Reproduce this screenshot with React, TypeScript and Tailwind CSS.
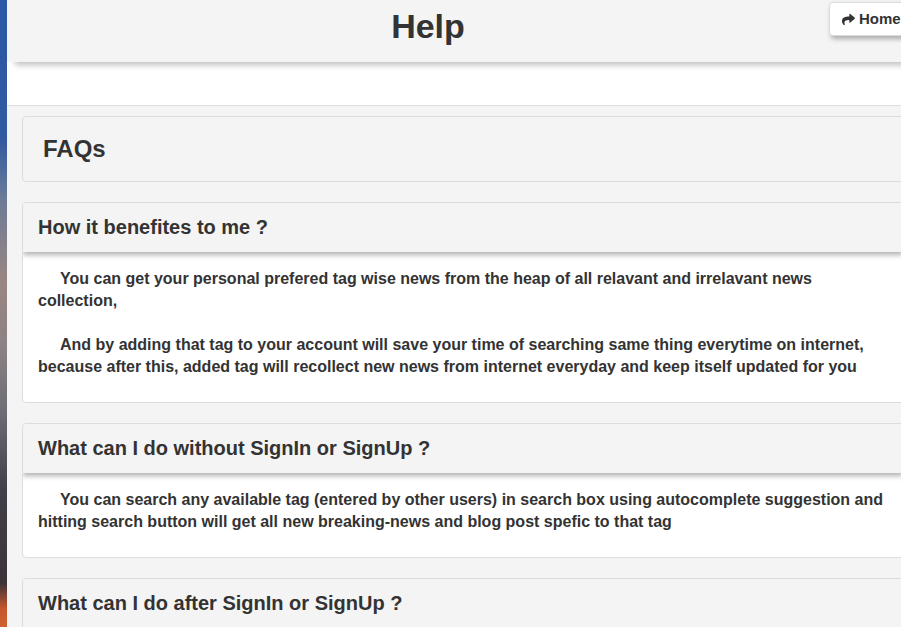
import { FaShare } from "react-icons/fa";

const faqs = [
  {
    title: "How it benefites to me ?",
    paragraphs: [
      "You can get your personal prefered tag wise news from the heap of all relavant and irrelavant news collection,",
      "And by adding that tag to your account will save your time of searching same thing everytime on internet, because after this, added tag will recollect new news from internet everyday and keep itself updated for you",
    ],
  },
  {
    title: "What can I do without SignIn or SignUp ?",
    paragraphs: [
      "You can search any available tag (entered by other users) in search box using autocomplete suggestion and hitting search button will get all new breaking-news and blog post spefic to that tag",
    ],
  },
  {
    title: "What can I do after SignIn or SignUp ?",
    paragraphs: [],
  },
];

function FaqCard( { title, paragraphs }: { title: string; paragraphs: string[] } ) {
  return (
    <div className="mt-[20px] w-[882px] shrink-0 overflow-hidden rounded-[4px] border border-[#dddddd] bg-white">
      <div className="relative z-10 flex h-[49px] items-center bg-[#f4f4f4] px-[15px] pb-[2px] shadow-[0_3px_5px_rgba(0,0,0,0.3)]">
        <h4 className="text-[20px] font-bold leading-none">{ title }</h4>
      </div>
      <div className="min-h-[40px] px-[15px] pt-[16px] pb-[24px]">
        { paragraphs.map( ( p, i ) => (
          <p key={ i } className={ `indent-[22px] text-[16px] leading-[22px] font-bold ${ i > 0 ? "mt-[22px]" : "" }` }>
            { p }
          </p>
        ) ) }
      </div>
    </div>
  );
}

export default function App() {
  return (
    <div
      className="flex h-[627px] w-[901px] overflow-hidden bg-[#f4f4f4] text-[#333333]"
      style={ { fontFamily: "'Liberation Sans', Arial, sans-serif" } }
    >
      <div className="w-[7px] shrink-0 bg-[linear-gradient(to_bottom,#2b59a6_0%,#3059a0_22%,#6d7b97_32%,#9a8682_45%,#8c8285_55%,#6c6b74_66%,#413f48_78%,#3d3339_93%,#c4552e_97%,#d0602f_100%)]" />
      <div className="flex min-w-0 flex-1 flex-col">
        <header className="relative z-20 h-[62px] w-[960px] shrink-0 bg-[#f4f4f4] shadow-[7px_4px_6px_-1px_rgba(0,0,0,0.25)]">
          <h1 className="w-[842px] pt-[6px] text-center text-[34px] font-bold leading-[40px]">Help</h1>
          <button className="absolute top-[2px] left-[822px] flex h-[34px] items-center gap-[4px] rounded-[4px] border border-[#dcdcdc] bg-white pr-[14px] pl-[12px] text-[15px] font-bold text-[#333333] shadow-[2px_3px_5px_rgba(0,0,0,0.3)]">
            <FaShare className="h-[13px] w-[13px]" />
            Home
          </button>
        </header>
        <div className="h-[43px] shrink-0 bg-white" />
        <main className="flex flex-1 flex-col border-t border-[#dddddd] bg-[#f4f4f4] pl-[15px] pt-[10px]">
          <div className="flex h-[66px] w-[890px] shrink-0 items-center rounded-[4px] border border-[#dddddd] bg-[#f4f4f4] px-[20px]">
            <h3 className="text-[24px] font-bold leading-none">FAQs</h3>
          </div>
          { faqs.map( ( f ) => (
            <FaqCard key={ f.title } title={ f.title } paragraphs={ f.paragraphs } />
          ) ) }
        </main>
      </div>
    </div>
  );
}
